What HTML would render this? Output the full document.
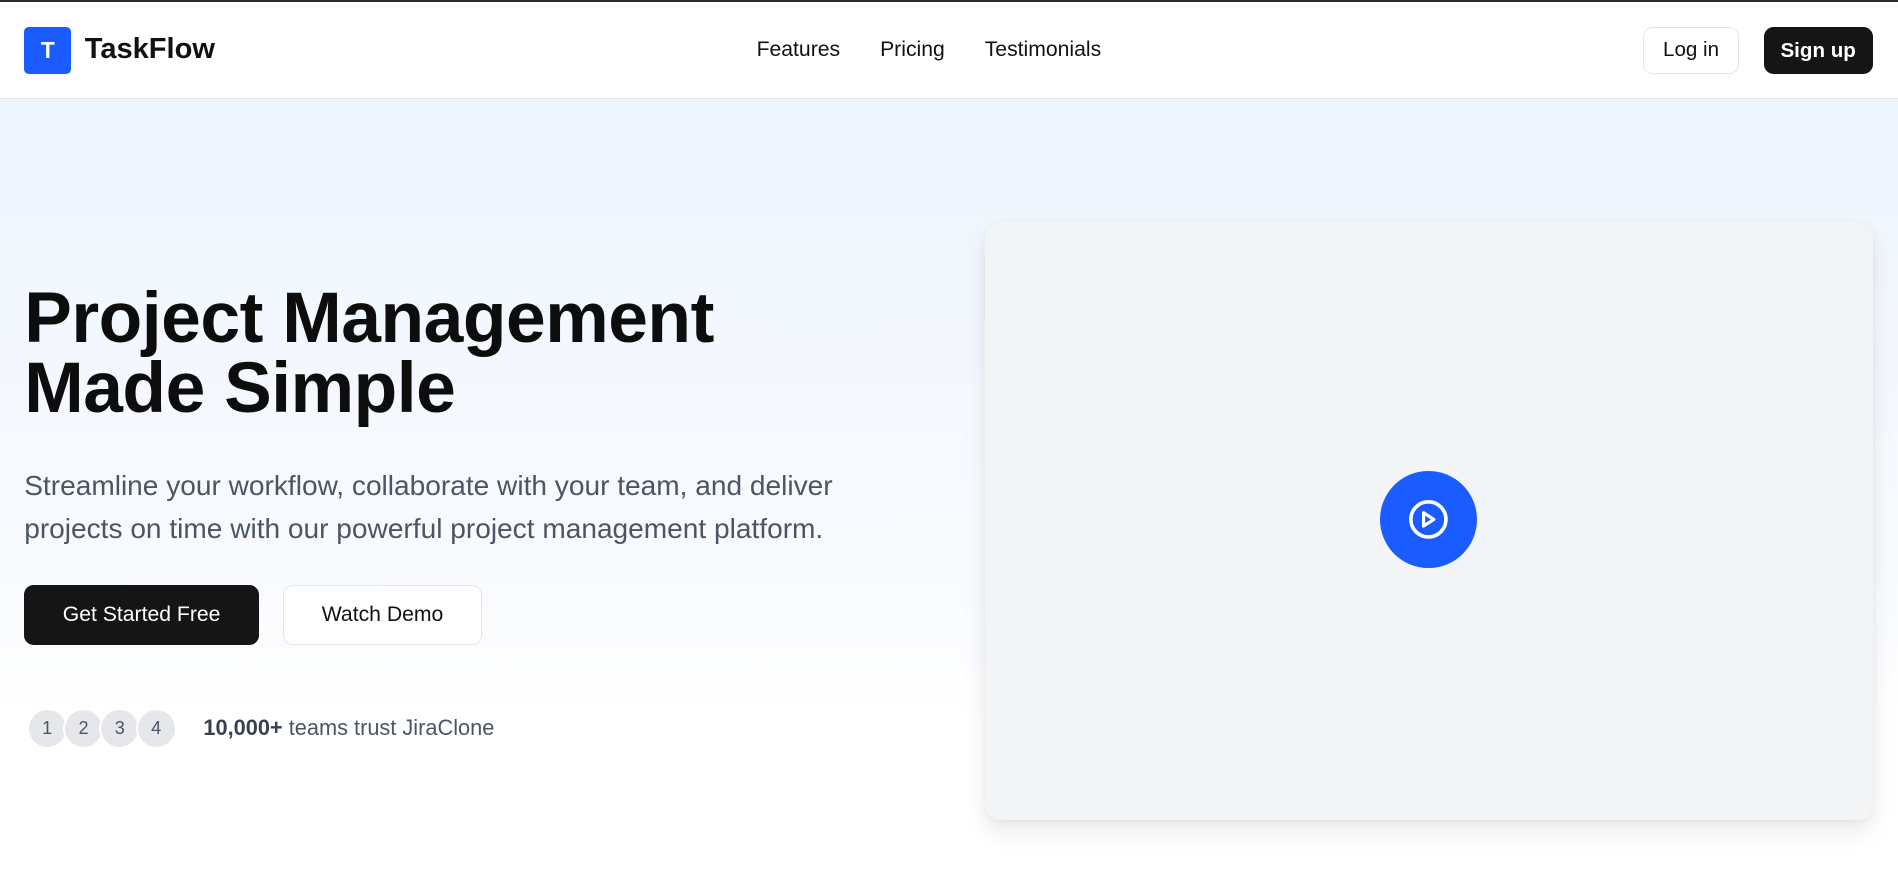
<!DOCTYPE html>
<html><head><meta charset="utf-8"><style>
*{box-sizing:border-box;margin:0;padding:0}
html,body{width:1898px;height:869px;overflow:hidden}
body{zoom:1.2105;font-family:"Liberation Sans",sans-serif;color:#111;background:linear-gradient(#eef5fe 82px,#f9fbfe 600px,#fff 718px);width:1568px;height:718px;position:relative}
.top{position:absolute;left:0;top:0;width:1568px;height:2px;background:#2a2a2a}
header{position:absolute;top:2px;left:0;width:1568px;height:80px;background:#fff;border-bottom:1px solid #e3e5e8}
.logo{position:absolute;left:20px;top:20px;width:39px;height:39px;background:#1a5cff;border-radius:4px;color:#fff;font-weight:bold;font-size:19px;text-align:center;line-height:39px}
.brand{position:absolute;left:70px;top:25px;font-size:24px;line-height:28px;font-weight:bold}
nav{position:absolute;top:29px;left:625px;font-size:17.5px}
nav span{margin-right:33px}
.login{position:absolute;left:1357px;top:20px;width:80px;height:39px;border:1px solid #e3e5e8;border-radius:8px;font-size:17px;text-align:center;line-height:37px;background:#fff}
.signup{position:absolute;left:1457px;top:20px;width:90px;height:39px;background:#151515;color:#fff;border-radius:8px;font-size:17px;text-align:center;line-height:39px;font-weight:bold}
h1{position:absolute;left:20px;top:234px;font-size:59px;line-height:58px;font-weight:bold;letter-spacing:-0.4px;color:#0d0d0d}
p.sub{position:absolute;left:20px;top:383px;font-size:23.2px;line-height:36px;color:#4b5563;width:720px;letter-spacing:0px}
.b1{position:absolute;left:20px;top:483px;width:194px;height:50px;background:#151515;color:#fff;border-radius:8px;font-size:17.5px;text-align:center;line-height:50px}
.b2{position:absolute;left:234px;top:483px;width:164px;height:50px;background:#fff;border:1px solid #e3e5e8;border-radius:8px;font-size:17.5px;text-align:center;line-height:48px}
.av{position:absolute;top:585px;width:34px;height:34px;border-radius:50%;background:#e5e7eb;border:2px solid #fff;font-size:15px;color:#4b5563;text-align:center;line-height:30px}
.trust{position:absolute;left:168px;top:591px;font-size:18px;color:#4b5563}
.trust b{color:#374151}
.card{position:absolute;left:814px;top:183px;width:733px;height:494px;background:#f3f4f6;border-radius:12px;box-shadow:0 10px 20px rgba(0,0,0,0.08),0 2px 6px rgba(0,0,0,0.05)}
.play{position:absolute;left:326px;top:206px;width:80px;height:80px;border-radius:50%;background:#1a5cff}
</style></head><body>
<div class="top"></div>
<header>
<div class="logo">T</div><div class="brand">TaskFlow</div>
<nav><span>Features</span><span>Pricing</span><span>Testimonials</span></nav>
<div class="login">Log in</div><div class="signup">Sign up</div>
</header>
<h1>Project Management<br>Made Simple</h1>
<p class="sub">Streamline your workflow, collaborate with your team, and deliver<br>projects on time with our powerful project management platform.</p>
<div class="b1">Get Started Free</div>
<div class="b2">Watch Demo</div>
<div class="av" style="left:22px">1</div>
<div class="av" style="left:52px">2</div>
<div class="av" style="left:82px">3</div>
<div class="av" style="left:112px">4</div>
<div class="trust"><b>10,000+</b> teams trust JiraClone</div>
<div class="card"><div class="play">
<svg width="80" height="80" viewBox="0 0 80 80"><circle cx="40" cy="40" r="14.5" fill="none" stroke="#fff" stroke-width="3"/><path d="M36 34.5v11l8.5-5.5z" fill="none" stroke="#fff" stroke-width="2.6" stroke-linejoin="round"/></svg>
</div></div>
</body></html>
